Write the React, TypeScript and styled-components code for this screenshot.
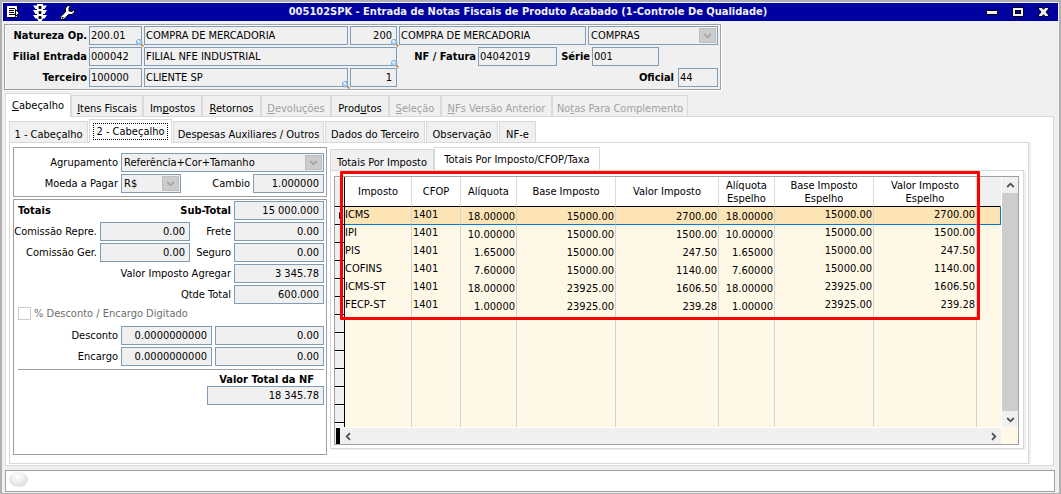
import React from "react";
import styled, { createGlobalStyle, css } from "styled-components";

const GlobalStyle = createGlobalStyle`
  *, *::before, *::after { box-sizing: border-box; }
  body { margin: 0; background: #f0f0f0; }
  body, button, input, select {
    font-family: Tahoma, "DejaVu Sans Condensed", "DejaVu Sans", sans-serif;
    font-size: 11px;
    line-height: 13px;
    color: #000;
  }
  u { text-decoration-skip-ink: none; }
`;

const LINE = "#d9d9d9";
const FACE = "#f0f0f0";
const EDGE = "#a0a0a0";

/* ---------- window frame ---------- */

const Window = styled.div`
  display: flex;
  flex-direction: column;
  height: 100vh;
  padding: 1px 0;
  border: 2px solid #b1b1b1;
  border-bottom-width: 1px;
  background: ${FACE};
`;

const TitleBar = styled.header`
  display: flex;
  align-items: center;
  flex: none;
  height: 18px;
  margin: 0 1px;
  padding: 0 9px 0 4px;
  background: #0000a0;
`;

const TitleGroup = styled.div<{ $end?: boolean }>`
  display: flex;
  align-items: center;
  gap: ${(p) => (p.$end ? 14 : 12)}px;
  flex: 1;
  justify-content: ${(p) => (p.$end ? "flex-end" : "flex-start")};
`;

const Title = styled.h1`
  margin: 0;
  font-size: 11px;
  font-weight: bold;
  line-height: 18px;
  white-space: nowrap;
  color: #f0f0f0;
`;

const TitleButton = styled.button`
  display: flex;
  padding: 0;
  border: 0;
  background: none;
`;

const StatusBar = styled.footer`
  flex: none;
  height: 22px;
  margin: 4px 4px 0 3px;
  padding: 1px 3px;
  border: 1px solid ${EDGE};
  background: #fff;
`;

const StatusLight = styled.div`
  width: 19px;
  height: 15px;
  border-radius: 50%;
  background: radial-gradient(ellipse at 45% 30%, #fff 0%, #ececec 45%, #d2d2d2 100%);
`;

/* ---------- form controls ---------- */

const FieldBox = styled.div<{ $w?: number }>`
  position: relative;
  display: flex;
  ${(p) => (p.$w ? css`flex: none; width: ${p.$w}px;` : css`flex: 1;`)}
`;

const Input = styled.input<{ $right?: boolean }>`
  width: 100%;
  min-width: 0;
  height: 19px;
  padding: 0 4px 0 1px;
  border: 1px solid #7f9db9;
  border-radius: 0;
  outline: 0;
  background: ${FACE};
  text-align: ${(p) => (p.$right ? "right" : "left")};
`;

const Select = styled.select`
  appearance: none;
  width: 100%;
  height: 19px;
  padding: 0 20px 0 2px;
  border: 1px solid #7f9db9;
  border-radius: 0;
  background: ${FACE};
  color: #000;
  opacity: 1;
`;

const SelectArrow = styled.span`
  position: absolute;
  top: 2px;
  right: 2px;
  display: flex;
  align-items: center;
  justify-content: center;
  width: 17px;
  height: 15px;
  border: 1px solid #bfbfbf;
  background: #ccc;
  pointer-events: none;
`;

const LookupMark = styled.svg`
  position: absolute;
  right: -2px;
  bottom: -2px;
`;

const Label = styled.label<{ $w?: number; $bold?: boolean }>`
  ${(p) => p.$w && css`flex: none; width: ${p.$w}px;`}
  font-weight: ${(p) => (p.$bold ? "bold" : "normal")};
  text-align: right;
  white-space: nowrap;
`;

const Row = styled.div<{ $gap?: number }>`
  display: flex;
  align-items: center;
  justify-content: flex-end;
  gap: ${(p) => p.$gap ?? 2}px;
`;

const HeaderPanel = styled.section`
  display: flex;
  flex: none;
  flex-direction: column;
  gap: 2px;
  align-self: flex-start;
  margin: 3px 0 0 2px;
  padding: 1px 2px 2px 0;
  border: 1px solid ${EDGE};
  box-shadow: 1px 1px #fff, inset 1px 1px #fff;
`;

/* ---------- tabs ---------- */

const TabList = styled.div<{ $gap?: number }>`
  display: flex;
  flex: none;
  align-items: flex-end;
  gap: ${(p) => p.$gap ?? 0}px;
  height: 23px;
`;

const Tab = styled.button<{ $w: number; $active?: boolean }>`
  position: relative;
  width: ${(p) => p.$w}px;
  height: ${(p) => (p.$active ? 24 : 21)}px;
  margin-bottom: ${(p) => (p.$active ? -1 : 0)}px;
  padding: ${(p) => (p.$active ? "0" : "4px 0 0")};
  border: solid ${LINE};
  border-width: 1px 1px 0 1px;
  background: ${(p) => (p.$active ? "#fff" : FACE)};
  white-space: nowrap;
  &:disabled { color: #a0a0a0; }
`;

const FocusText = styled.span`
  display: inline-block;
  padding: 1px 2px;
  border: 1px dotted #000;
`;

const MainTabs = styled.main`
  display: flex;
  flex: 1;
  flex-direction: column;
  min-height: 0;
  margin: 3px 5px 0 3px;
`;

const MainPage = styled.div`
  display: flex;
  flex: 1;
  flex-direction: column;
  min-height: 0;
  padding: 2px 24px 1px 3px;
  border: 1px solid ${LINE};
  background: #fff;
`;

const SubPage = styled.div`
  display: flex;
  flex: 1;
  gap: 3px;
  min-height: 0;
  padding: 4px 4px 8px 3px;
  border: 1px solid ${LINE};
  box-shadow: 2px 0 ${FACE};
`;

/* ---------- left column ---------- */

const Side = styled.div`
  display: flex;
  flex: none;
  flex-direction: column;
  gap: 2px;
  width: 314px;
`;

const Box = styled.section<{ $grow?: boolean }>`
  display: flex;
  flex-direction: column;
  gap: 2px;
  padding: ${(p) => (p.$grow ? "1px" : "5px")} 2px 3px 4px;
  border: 1px solid ${EDGE};
  ${(p) => p.$grow && css`flex: 1;`}
`;

const BoxTitle = styled.h2`
  margin: 0 auto 0 0;
  font-size: 11px;
  line-height: 13px;
`;

const CheckRow = styled.label`
  display: flex;
  align-items: center;
  gap: 3px;
  height: 14px;
  color: #6d6d6d;
`;

const CheckBox = styled.input`
  appearance: none;
  width: 13px;
  height: 13px;
  margin: 0;
  border: 1px solid #ccc;
  background: #fff;
`;

const Discounts = styled.div`
  display: flex;
  flex-direction: column;
  gap: 2px;
  margin-top: 4px;
  padding-bottom: 3px;
  border-bottom: 1px solid ${EDGE};
`;

const GrandTotal = styled.div`
  display: flex;
  flex-direction: column;
  align-items: flex-end;
  margin-top: 1px;
`;

const GrandLabel = styled.label`
  padding-right: 10px;
  font-weight: bold;
`;

/* ---------- tax grid ---------- */

const Taxes = styled.div`
  display: flex;
  flex: 1;
  flex-direction: column;
  min-width: 0;
  min-height: 0;
  margin-bottom: 6px;
`;

const TaxPage = styled.div`
  position: relative;
  display: flex;
  flex: 1;
  min-height: 0;
  padding: 5px 4px 3px 3px;
  border: 1px solid ${LINE};
  box-shadow: 2px 1px ${FACE};
`;

const Highlight = styled.div`
  position: absolute;
  top: 0;
  left: 9px;
  width: 640px;
  height: 149px;
  border: 3px solid #f00;
  border-radius: 1px;
  pointer-events: none;
`;

const Grid = styled.div`
  display: grid;
  grid-template-columns: 1fr 17px;
  grid-template-rows: 1fr 17px;
  flex: 1;
  min-width: 0;
  min-height: 0;
  border: 1px solid ${EDGE};
  background: #fff8e7;
`;

const GridView = styled.div`
  min-width: 0;
  min-height: 0;
  overflow: hidden;
`;

const Table = styled.table`
  width: 100%;
  table-layout: fixed;
  border-collapse: separate;
  border-spacing: 0;
`;

const HeadCell = styled.th<{ $blank?: boolean }>`
  height: 30px;
  padding: 0 2px;
  border-right: 1px solid ${(p) => (p.$blank ? FACE : "#dcdcdc")};
  border-bottom: 1px solid #000;
  background: ${(p) => (p.$blank ? FACE : "#fff")};
  font-weight: normal;
`;

const Marker = styled.td`
  padding: 0 0 0 4px;
  border-right: 1px solid #000;
  border-bottom: 1px solid #000;
  background: ${FACE};
  box-shadow: inset 0 1px #fff;
  svg { display: block; }
`;

const Cell = styled.td<{ $right?: boolean; $raised?: boolean }>`
  height: 18px;
  padding: ${(p) => (p.$raised ? 2 : 4)}px 1px 0 ${(p) => (p.$right ? 1 : 0)}px;
  border-right: 1px solid #d4d4d4;
  line-height: 12px;
  vertical-align: top;
  white-space: nowrap;
  text-align: ${(p) => (p.$right ? "right" : "left")};
`;

const CodeCell = styled(Cell)`
  padding-left: 1px;
`;

const Tail = styled.td`
  padding: 0;
`;

const BodyRow = styled.tr<{ $selected?: boolean }>`
  ${(p) =>
    p.$selected &&
    css`
      background: #fde4b5;
      ${Cell}, ${Tail} { border-bottom: 1px solid #0078d7; }
      ${Tail} { border-right: 1px solid #0078d7; }
    `}
`;

const VScroll = styled.div`
  display: flex;
  flex-direction: column;
  justify-content: space-between;
  border-left: 1px solid #fff;
  background: ${FACE};
`;

const HScroll = styled.div`
  display: flex;
  justify-content: space-between;
  border-top: 1px solid #fff;
  background: ${FACE};
`;

const SplitHandle = styled.span`
  width: 4px;
  margin-left: 1px;
  background: #000;
`;

const HTrack = styled.span`
  flex: 1;
`;

const Thumb = styled.span`
  flex: 1;
  background: #cdcdcd;
`;

const ScrollButton = styled.button`
  display: flex;
  align-items: center;
  justify-content: center;
  flex: none;
  width: 16px;
  height: 16px;
  padding: 0;
  border: 0;
  background: none;
`;

/* ---------- icons ---------- */

const MenuIcon = () => (
  <svg width="13" height="14" viewBox="0 0 13 14" aria-hidden="true">
    <path d="M0 1h10v12H0z" fill="#fff" />
    <path d="M2 3.500h6M2 5.500h5M2 7.500h5M2 9.500h6" stroke="#000" />
    <path d="M0 12.500h11M10.500 1v3" stroke="#000" />
    <path d="M8.500 4.500v7l3.700-3.500z" fill="#fff" stroke="#000" />
  </svg>
);

const SignalIcon = () => (
  <svg width="16" height="17" viewBox="0 0 16 17" aria-hidden="true">
    <path
      d="M5 0h6v1.500h4L12.500 5H11v1h4l-2.500 4H11v1h4L12.500 14.500H11L9.500 17h-3L5 14.500H3.500L1 11h4v-1H3.500L1 6h4V5H3.500L1 1.500h4z"
      fill="#fff"
    />
    <rect x="6.500" y="2" width="3" height="3" rx="1" />
    <rect x="6.500" y="7" width="3" height="3" rx="1" />
    <rect x="6.500" y="12" width="3" height="3" rx="1" />
  </svg>
);

const WrenchIcon = () => (
  <svg width="15" height="15" viewBox="0 0 15 15" aria-hidden="true">
    <path
      d="M10.500 .5H8L5.500 3v4L.8 11.500v2l1 1h2L8.500 9.500H12l2.500-2.500V4.500L12 6.500L9 6V3z"
      fill="#fff"
      stroke="#000"
    />
    <rect x="2" y="12" width="1.500" height="1.500" />
  </svg>
);

const MinimizeIcon = () => (
  <svg width="12" height="10" viewBox="0 0 12 10" aria-hidden="true">
    <rect x=".5" y="3.500" width="11" height="4" fill="#eee" stroke="#000" />
  </svg>
);

const MaximizeIcon = () => (
  <svg width="12" height="10" viewBox="0 0 12 10" aria-hidden="true">
    <rect x=".5" y=".5" width="11" height="9" rx=".5" fill="#eee" stroke="#000" />
    <rect x="3.500" y="3.500" width="5" height="3" fill="#0000a0" stroke="#000" />
  </svg>
);

const CloseIcon = () => (
  <svg width="11" height="10" viewBox="0 0 11 10" aria-hidden="true">
    <path
      d="M.5 .5h3.500L5.500 2.300L7 .5h3.500v1.500L8 5l2.500 3v1.500H7L5.500 7.700L4 9.500H.5V8L3 5L.5 2z"
      fill="#eee"
      stroke="#000"
    />
  </svg>
);

const Lookup = () => (
  <LookupMark width="8" height="8" viewBox="0 0 8 8" aria-hidden="true">
    <path d="M5.200 5.200L7.400 7.600" stroke="#c98a2c" strokeWidth="1.800" />
    <circle cx="3.200" cy="3.200" r="2.800" fill="#a9d2f5" stroke="#6f9ed0" strokeWidth=".8" />
    <circle cx="2.500" cy="2.300" r="1.100" fill="#fff" />
  </LookupMark>
);

const CurrentRow = () => (
  <svg width="5" height="7" viewBox="0 0 5 7" aria-hidden="true">
    <path d="M0 0l4.500 3.500L0 7z" />
  </svg>
);

const turns = { up: 0, right: 90, down: 180, left: 270 };

const Chevron = ({ to, color = "#505050" }: { to: keyof typeof turns; color?: string }) => (
  <svg width="9" height="9" viewBox="0 0 9 9" aria-hidden="true">
    <path
      d="M1.200 6L4.500 2.700L7.800 6"
      fill="none"
      stroke={color}
      strokeWidth="1.800"
      transform={`rotate(${turns[to]} 4.500 4.500)`}
    />
  </svg>
);

/* ---------- pieces ---------- */

type FieldProps = { id: string; value: string; w?: number; right?: boolean; lookup?: boolean; name?: string };

const Field = ({ id, value, w, right, lookup, name }: FieldProps) => (
  <FieldBox $w={w}>
    <Input id={id} defaultValue={value} $right={right} aria-label={name} readOnly />
    {lookup && <Lookup />}
  </FieldBox>
);

const Choice = ({ id, value, w, name }: FieldProps) => (
  <FieldBox $w={w}>
    <Select id={id} aria-label={name} defaultValue={value} disabled>
      <option>{value}</option>
    </Select>
    <SelectArrow>
      <Chevron to="down" color="#a6a6a6" />
    </SelectArrow>
  </FieldBox>
);

const columns = [
  { title: "Imposto", w: 67, raised: true },
  { title: "CFOP", w: 49, raised: true },
  { title: "Alíquota", w: 56, right: true },
  { title: "Base Imposto", w: 99, right: true },
  { title: "Valor Imposto", w: 103, right: true },
  { title: "Alíquota Espelho", w: 56, right: true },
  { title: "Base Imposto Espelho", w: 99, right: true, raised: true },
  { title: "Valor Imposto Espelho", w: 103, right: true, raised: true },
];

const taxes = [
  ["ICMS", "1401", "18.00000", "15000.00", "2700.00"],
  ["IPI", "1401", "10.00000", "15000.00", "1500.00"],
  ["PIS", "1401", "1.65000", "15000.00", "247.50"],
  ["COFINS", "1401", "7.60000", "15000.00", "1140.00"],
  ["ICMS-ST", "1401", "18.00000", "23925.00", "1606.50"],
  ["FECP-ST", "1401", "1.00000", "23925.00", "239.28"],
].map((t) => [...t, t[2], t[3], t[4]]);

const emptyRows = Array.from({ length: 40 }, (_, i) => i);

const TaxGrid = () => (
  <Grid>
    <GridView>
      <Table>
        <colgroup>
          <col width={10} />
          {columns.map((c) => (
            <col key={c.title} width={c.w} />
          ))}
          <col />
        </colgroup>
        <thead>
          <tr>
            <Marker as="th" />
            {columns.map((c) => (
              <HeadCell key={c.title} scope="col">{c.title}</HeadCell>
            ))}
            <HeadCell $blank />
          </tr>
        </thead>
        <tbody>
          {taxes.map((tax, i) => (
            <BodyRow key={tax[0]} $selected={i === 0}>
              <Marker>{i === 0 && <CurrentRow />}</Marker>
              {columns.map((c, j) => {
                const Part = j === 1 ? CodeCell : Cell;
                return (
                  <Part key={c.title} $right={c.right} $raised={c.raised}>{tax[j]}</Part>
                );
              })}
              <Tail />
            </BodyRow>
          ))}
          {emptyRows.map((n) => (
            <BodyRow key={n} aria-hidden="true">
              <Marker />
              {columns.map((c) => (
                <Cell key={c.title} />
              ))}
              <Tail />
            </BodyRow>
          ))}
        </tbody>
      </Table>
    </GridView>
    <VScroll>
      <ScrollButton aria-label="Rolar para cima"><Chevron to="up" /></ScrollButton>
      <Thumb />
      <ScrollButton aria-label="Rolar para baixo"><Chevron to="down" /></ScrollButton>
    </VScroll>
    <HScroll>
      <SplitHandle />
      <ScrollButton aria-label="Rolar para a esquerda"><Chevron to="left" /></ScrollButton>
      <HTrack />
      <ScrollButton aria-label="Rolar para a direita"><Chevron to="right" /></ScrollButton>
    </HScroll>
  </Grid>
);

export default function App() {
  return (
    <>
      <GlobalStyle />
      <Window>
        <TitleBar>
          <TitleGroup>
            <TitleButton aria-label="Menu"><MenuIcon /></TitleButton>
            <TitleButton aria-label="Sinal"><SignalIcon /></TitleButton>
            <TitleButton aria-label="Ferramentas"><WrenchIcon /></TitleButton>
          </TitleGroup>
          <Title>005102SPK - Entrada de Notas Fiscais de Produto Acabado (1-Controle De Qualidade)</Title>
          <TitleGroup $end>
            <TitleButton aria-label="Minimizar"><MinimizeIcon /></TitleButton>
            <TitleButton aria-label="Maximizar"><MaximizeIcon /></TitleButton>
            <TitleButton aria-label="Fechar"><CloseIcon /></TitleButton>
          </TitleGroup>
        </TitleBar>

        <HeaderPanel>
          <Row>
            <Label $w={82} $bold htmlFor="natureza">Natureza Op.</Label>
            <Field id="natureza" value="200.01" w={53} lookup />
            <Field id="natureza-nome" name="Descrição da natureza" value="COMPRA DE MERCADORIA" w={204} />
            <Field id="tipo" name="Código do tipo" value="200" w={47} right lookup />
            <Field id="tipo-nome" name="Descrição do tipo" value="COMPRA DE MERCADORIA" w={187} />
            <Choice id="classe" name="Classe" value="COMPRAS" w={130} />
          </Row>
          <Row>
            <Label $w={82} $bold htmlFor="filial">Filial Entrada</Label>
            <Field id="filial" value="000042" w={53} />
            <Field id="filial-nome" name="Nome da filial" value="FILIAL NFE INDUSTRIAL" w={253} lookup />
            <Label $w={77} $bold htmlFor="fatura">NF / Fatura</Label>
            <Field id="fatura" value="04042019" w={79} />
            <Label $w={31} $bold htmlFor="serie">Série</Label>
            <FieldBox>
              <Field id="serie" value="001" w={67} />
            </FieldBox>
          </Row>
          <Row>
            <Label $w={82} $bold htmlFor="terceiro">Terceiro</Label>
            <Field id="terceiro" value="100000" w={53} />
            <Field id="terceiro-nome" name="Nome do terceiro" value="CLIENTE SP" w={204} lookup />
            <Field id="terceiro-seq" name="Sequência" value="1" w={47} right />
            <Label $w={275} $bold htmlFor="oficial">Oficial</Label>
            <FieldBox />
            <Field id="oficial" value="44" w={40} />
          </Row>
        </HeaderPanel>

        <MainTabs>
          <TabList role="tablist">
            <Tab role="tab" $w={66} $active><u>C</u>abeçalho</Tab>
            <Tab role="tab" $w={72}><u>I</u>tens Fiscais</Tab>
            <Tab role="tab" $w={59}>Im<u>p</u>ostos</Tab>
            <Tab role="tab" $w={59}><u>R</u>etornos</Tab>
            <Tab role="tab" $w={70} disabled><u>D</u>evoluções</Tab>
            <Tab role="tab" $w={58}>Prod<u>u</u>tos</Tab>
            <Tab role="tab" $w={52} disabled><u>S</u>eleção</Tab>
            <Tab role="tab" $w={111} disabled><u>N</u>Fs Versão Anterior</Tab>
            <Tab role="tab" $w={136} disabled>No<u>t</u>as Para Complemento</Tab>
          </TabList>
          <MainPage role="tabpanel">
            <TabList role="tablist" $gap={1}>
              <Tab role="tab" $w={79}>1 - Cabeçalho</Tab>
              <Tab role="tab" $w={83} $active><FocusText>2 - Cabeçalho</FocusText></Tab>
              <Tab role="tab" $w={151}>Despesas Auxiliares / Outros</Tab>
              <Tab role="tab" $w={100}>Dados do Terceiro</Tab>
              <Tab role="tab" $w={72}>Observação</Tab>
              <Tab role="tab" $w={37}>NF-e</Tab>
            </TabList>
            <SubPage role="tabpanel">
              <Side>
                <Box>
                  <Row $gap={3}>
                    <Label htmlFor="agrupamento">Agrupamento</Label>
                    <Choice id="agrupamento" value="Referência+Cor+Tamanho" w={203} />
                  </Row>
                  <Row $gap={3}>
                    <Label htmlFor="moeda">Moeda a Pagar</Label>
                    <Choice id="moeda" value="R$" w={60} />
                    <Label $w={66} htmlFor="cambio">Cambio</Label>
                    <Field id="cambio" value="1.000000" w={71} right />
                  </Row>
                </Box>
                <Box $grow>
                  <Row $gap={3}>
                    <BoxTitle>Totais</BoxTitle>
                    <Label $bold htmlFor="subtotal">Sub-Total</Label>
                    <Field id="subtotal" value="15 000.000" w={90} right />
                  </Row>
                  <Row $gap={3}>
                    <Label htmlFor="com-repre">Comissão Repre.</Label>
                    <Field id="com-repre" value="0.00" w={90} right />
                    <Label $w={38} htmlFor="frete">Frete</Label>
                    <Field id="frete" value="0.00" w={90} right />
                  </Row>
                  <Row $gap={3}>
                    <Label htmlFor="com-ger">Comissão Ger.</Label>
                    <Field id="com-ger" value="0.00" w={90} right />
                    <Label $w={38} htmlFor="seguro">Seguro</Label>
                    <Field id="seguro" value="0.00" w={90} right />
                  </Row>
                  <Row $gap={3}>
                    <Label htmlFor="agregar">Valor Imposto Agregar</Label>
                    <Field id="agregar" value="3 345.78" w={90} right />
                  </Row>
                  <Row $gap={3}>
                    <Label htmlFor="qtde">Qtde Total</Label>
                    <Field id="qtde" value="600.000" w={90} right />
                  </Row>
                  <CheckRow>
                    <CheckBox type="checkbox" disabled />
                    % Desconto / Encargo Digitado
                  </CheckRow>
                  <Discounts>
                    <Row $gap={3}>
                      <Label htmlFor="desconto">Desconto</Label>
                      <Field id="desconto" value="0.0000000000" w={91} right />
                      <Field id="desconto-valor" name="Valor do desconto" value="0.00" w={109} right />
                    </Row>
                    <Row $gap={3}>
                      <Label htmlFor="encargo">Encargo</Label>
                      <Field id="encargo" value="0.0000000000" w={91} right />
                      <Field id="encargo-valor" name="Valor do encargo" value="0.00" w={109} right />
                    </Row>
                  </Discounts>
                  <GrandTotal>
                    <GrandLabel htmlFor="total-nf">Valor Total da NF</GrandLabel>
                    <Field id="total-nf" value="18 345.78" w={117} right />
                  </GrandTotal>
                </Box>
              </Side>
              <Taxes>
                <TabList role="tablist">
                  <Tab role="tab" $w={104}>Totais Por Imposto</Tab>
                  <Tab role="tab" $w={166} $active>Totais Por Imposto/CFOP/Taxa</Tab>
                </TabList>
                <TaxPage role="tabpanel">
                  <TaxGrid />
                  <Highlight />
                </TaxPage>
              </Taxes>
            </SubPage>
          </MainPage>
        </MainTabs>

        <StatusBar>
          <StatusLight />
        </StatusBar>
      </Window>
    </>
  );
}
